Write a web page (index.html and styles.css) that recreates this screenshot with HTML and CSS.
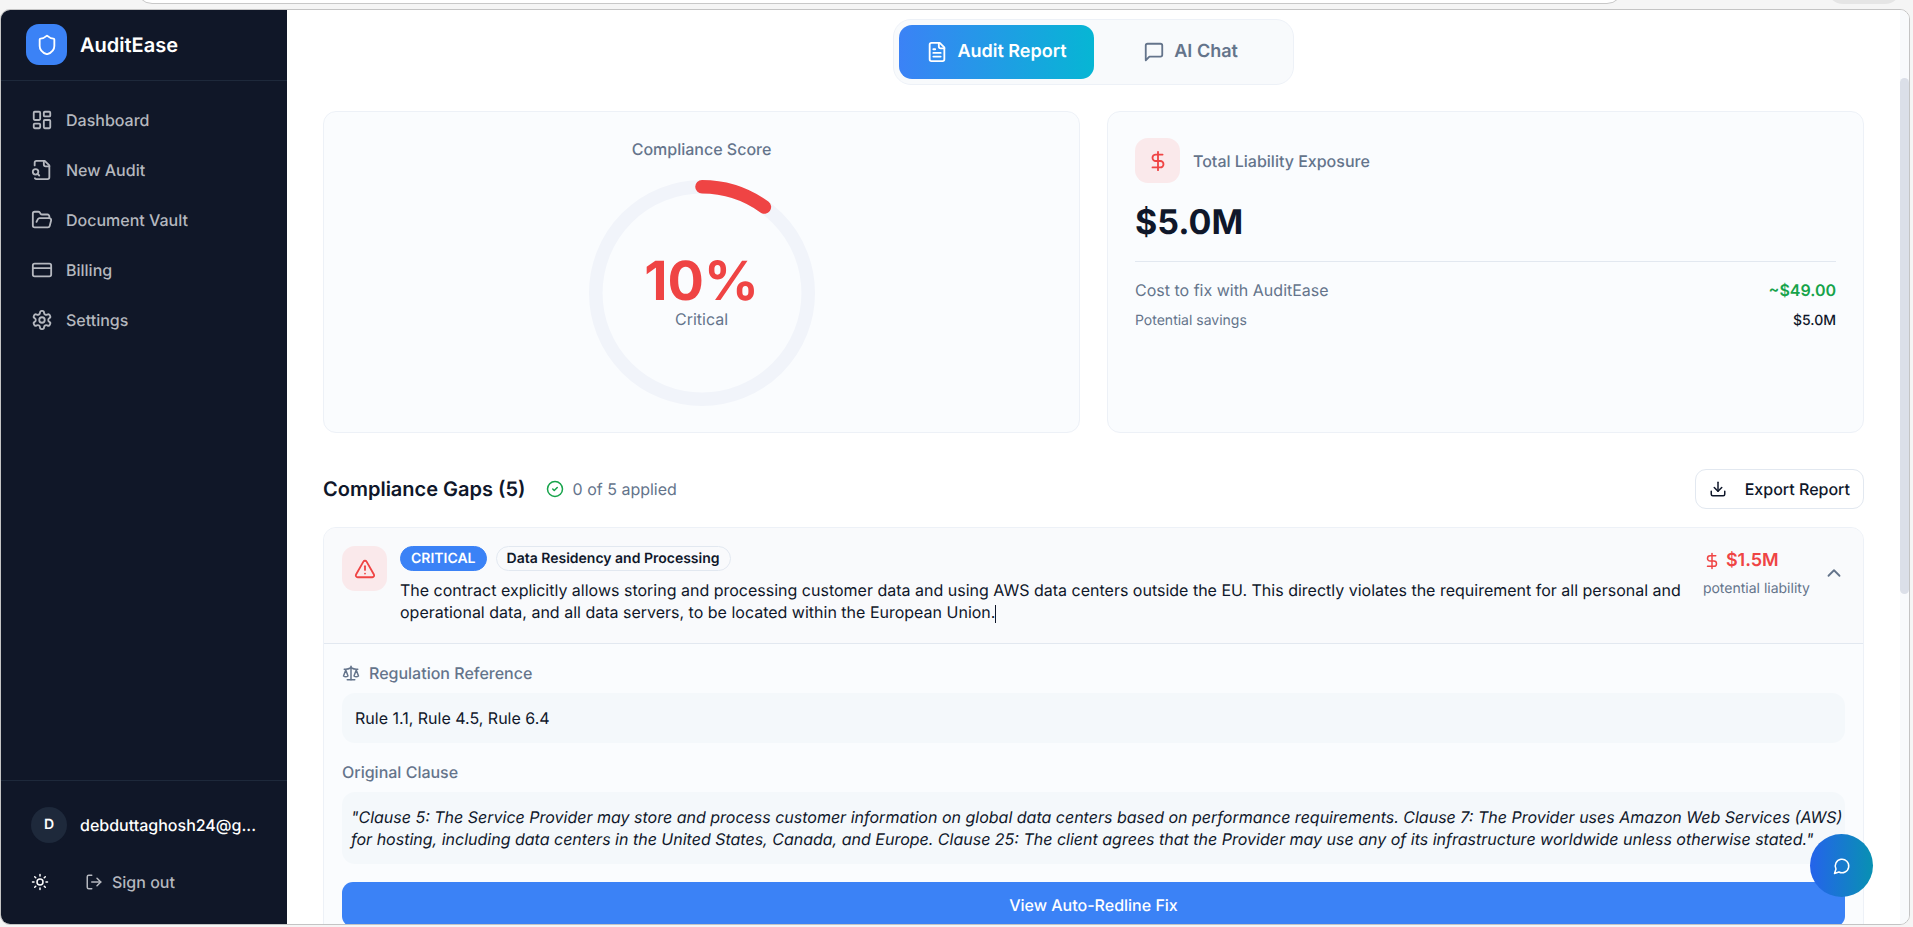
FILE: index.html
```html
<!DOCTYPE html>
<html lang="en">
<head>
    <meta charset="UTF-8">
    <meta name="viewport" content="width=device-width, initial-scale=1.0">
    <title>AuditEase - Audit Report</title>
    <link rel="stylesheet" href="styles.css">
</head>
<body>
    <div class="browser-bar">
        <div class="address-bar"></div>
        <div class="browser-button"></div>
    </div>

    <div class="app">
        <aside class="sidebar">
            <div class="brand">
                <div class="brand-logo">
                    <svg class="icon icon-md" viewBox="0 0 24 24"><path d="M20 13c0 5-3.500 7.500-7.660 8.950a1 1 0 0 1-.670-.010C7.500 20.500 4 18 4 13V6a1 1 0 0 1 1-1c2 0 4.500-1.200 6.240-2.720a1.170 1.170 0 0 1 1.520 0C14.510 3.810 17 5 19 5a1 1 0 0 1 1 1z"/></svg>
                </div>
                <span class="brand-name">AuditEase</span>
            </div>

            <nav class="nav">
                <a href="#" class="nav-item">
                    <svg class="icon icon-md" viewBox="0 0 24 24"><rect width="7" height="9" x="3" y="3" rx="1"/><rect width="7" height="5" x="14" y="3" rx="1"/><rect width="7" height="9" x="14" y="12" rx="1"/><rect width="7" height="5" x="3" y="16" rx="1"/></svg>
                    Dashboard
                </a>
                <a href="#" class="nav-item">
                    <svg class="icon icon-md" viewBox="0 0 24 24"><path d="M14 2v4a2 2 0 0 0 2 2h4"/><path d="M4.268 21a2 2 0 0 0 1.727 1H18a2 2 0 0 0 2-2V7l-5-5H6a2 2 0 0 0-2 2v3"/><path d="m9 18-1.500-1.500"/><circle cx="5" cy="14" r="3"/></svg>
                    New Audit
                </a>
                <a href="#" class="nav-item">
                    <svg class="icon icon-md" viewBox="0 0 24 24"><path d="m6 14 1.500-2.900A2 2 0 0 1 9.240 10H20a2 2 0 0 1 1.940 2.500l-1.540 6a2 2 0 0 1-1.950 1.500H4a2 2 0 0 1-2-2V5a2 2 0 0 1 2-2h3.900a2 2 0 0 1 1.690.900l.810 1.200a2 2 0 0 0 1.670.900H18a2 2 0 0 1 2 2v2"/></svg>
                    Document Vault
                </a>
                <a href="#" class="nav-item">
                    <svg class="icon icon-md" viewBox="0 0 24 24"><rect width="20" height="14" x="2" y="5" rx="2"/><path d="M2 10h20"/></svg>
                    Billing
                </a>
                <a href="#" class="nav-item">
                    <svg class="icon icon-md" viewBox="0 0 24 24"><path d="M12.220 2h-.440a2 2 0 0 0-2 2v.180a2 2 0 0 1-1 1.730l-.430.250a2 2 0 0 1-2 0l-.150-.080a2 2 0 0 0-2.730.730l-.220.380a2 2 0 0 0 .730 2.730l.150.100a2 2 0 0 1 1 1.720v.510a2 2 0 0 1-1 1.740l-.150.090a2 2 0 0 0-.730 2.730l.220.380a2 2 0 0 0 2.730.730l.150-.080a2 2 0 0 1 2 0l.430.250a2 2 0 0 1 1 1.730V20a2 2 0 0 0 2 2h.440a2 2 0 0 0 2-2v-.180a2 2 0 0 1 1-1.730l.430-.250a2 2 0 0 1 2 0l.150.080a2 2 0 0 0 2.730-.730l.220-.390a2 2 0 0 0-.730-2.730l-.150-.080a2 2 0 0 1-1-1.740v-.500a2 2 0 0 1 1-1.740l.150-.090a2 2 0 0 0 .730-2.730l-.220-.380a2 2 0 0 0-2.730-.730l-.150.080a2 2 0 0 1-2 0l-.430-.250a2 2 0 0 1-1-1.730V4a2 2 0 0 0-2-2z"/><circle cx="12" cy="12" r="3"/></svg>
                    Settings
                </a>
            </nav>

            <div class="sidebar-footer">
                <div class="user">
                    <div class="avatar">D</div>
                    <span class="user-email">debduttaghosh24@g...</span>
                </div>
                <div class="footer-actions">
                    <button class="theme-button" aria-label="Toggle theme">
                        <svg class="icon icon-sm" viewBox="0 0 24 24"><circle cx="12" cy="12" r="4"/><path d="M12 2v2M12 20v2M4.930 4.930l1.410 1.410M17.660 17.660l1.410 1.410M2 12h2M20 12h2M6.340 17.660l-1.410 1.410M19.070 4.930l-1.410 1.410"/></svg>
                    </button>
                    <button class="signout-button">
                        <svg class="icon icon-sm" viewBox="0 0 24 24"><path d="M9 21H5a2 2 0 0 1-2-2V5a2 2 0 0 1 2-2h4"/><path d="m16 17 5-5-5-5"/><path d="M21 12H9"/></svg>
                        Sign out
                    </button>
                </div>
            </div>
        </aside>

        <main class="content">
            <div class="tabs">
                <button class="tab tab-active">
                    <svg class="icon icon-md" viewBox="0 0 24 24"><path d="M15 2H6a2 2 0 0 0-2 2v16a2 2 0 0 0 2 2h12a2 2 0 0 0 2-2V7Z"/><path d="M14 2v4a2 2 0 0 0 2 2h4"/><path d="M10 9H8M16 13H8M16 17H8"/></svg>
                    Audit Report
                </button>
                <button class="tab">
                    <svg class="icon icon-md" viewBox="0 0 24 24"><path d="M21 15a2 2 0 0 1-2 2H7l-4 4V5a2 2 0 0 1 2-2h14a2 2 0 0 1 2 2z"/></svg>
                    AI Chat
                </button>
            </div>

            <div class="summary">
                <section class="card score-card">
                    <h2 class="card-label">Compliance Score</h2>
                    <div class="score-ring">
                        <svg class="ring" viewBox="0 0 200 200">
                            <circle class="ring-track" cx="100" cy="100" r="94"/>
                            <circle class="ring-value" cx="100" cy="100" r="94" pathLength="100" stroke-dasharray="10 100" transform="rotate(-90 100 100)"/>
                        </svg>
                        <div class="score-text">
                            <span class="score-number">10%</span>
                            <span class="score-status">Critical</span>
                        </div>
                    </div>
                </section>

                <section class="card">
                    <div class="liability-header">
                        <div class="alert-icon">
                            <svg class="icon icon-md" viewBox="0 0 24 24"><path d="M12 2v20"/><path d="M17 5H9.500a3.500 3.500 0 0 0 0 7h5a3.500 3.500 0 0 1 0 7H6"/></svg>
                        </div>
                        <h2 class="card-label">Total Liability Exposure</h2>
                    </div>
                    <p class="liability-value">$5.0M</p>
                    <div class="cost-rows">
                        <div class="cost-row">
                            <span>Cost to fix with AuditEase</span>
                            <span class="cost-fix">~$49.00</span>
                        </div>
                        <div class="cost-row cost-row-small">
                            <span>Potential savings</span>
                            <span class="cost-savings">$5.0M</span>
                        </div>
                    </div>
                </section>
            </div>

            <div class="gaps-header">
                <h2 class="gaps-title">Compliance Gaps (5)</h2>
                <div class="applied">
                    <svg class="icon icon-sm" viewBox="0 0 24 24"><circle cx="12" cy="12" r="10"/><path d="m9 12 2 2 4-4"/></svg>
                    0 of 5 applied
                </div>
                <button class="export-button">
                    <svg class="icon icon-sm" viewBox="0 0 24 24"><path d="M21 15v4a2 2 0 0 1-2 2H5a2 2 0 0 1-2-2v-4"/><path d="m7 10 5 5 5-5"/><path d="M12 15V3"/></svg>
                    Export Report
                </button>
            </div>

            <article class="gap">
                <div class="gap-header">
                    <div class="alert-icon">
                        <svg class="icon icon-md" viewBox="0 0 24 24"><path d="m21.730 18-8-14a2 2 0 0 0-3.480 0l-8 14A2 2 0 0 0 4 21h16a2 2 0 0 0 1.730-3"/><path d="M12 9v4"/><path d="M12 17h.010"/></svg>
                    </div>
                    <div class="gap-info">
                        <div class="badges">
                            <span class="badge badge-critical">CRITICAL</span>
                            <span class="badge">Data Residency and Processing</span>
                        </div>
                        <p class="gap-text">The contract explicitly allows storing and processing customer data and using AWS data centers outside the EU. This directly violates the requirement for all personal and operational data, and all data servers, to be located within the European Union.<span class="caret"></span></p>
                    </div>
                    <div class="gap-liability">
                        <div class="gap-amount">
                            <svg class="icon icon-sm" viewBox="0 0 24 24"><path d="M12 2v20"/><path d="M17 5H9.500a3.500 3.500 0 0 0 0 7h5a3.500 3.500 0 0 1 0 7H6"/></svg>
                            $1.5M
                        </div>
                        <span class="gap-note">potential liability</span>
                    </div>
                    <button class="collapse-button" aria-label="Collapse">
                        <svg class="icon icon-md" viewBox="0 0 24 24"><path d="m18 15-6-6-6 6"/></svg>
                    </button>
                </div>

                <div class="gap-body">
                    <h3 class="section-label">
                        <svg class="icon icon-sm" viewBox="0 0 24 24"><path d="m16 16 3-8 3 8c-.870.650-1.920 1-3 1s-2.130-.350-3-1Z"/><path d="m2 16 3-8 3 8c-.870.650-1.920 1-3 1s-2.130-.350-3-1Z"/><path d="M7 21h10"/><path d="M12 3v18"/><path d="M3 7h2c2 0 5-1 7-2 2 1 5 2 7 2h2"/></svg>
                        Regulation Reference
                    </h3>
                    <p class="quote">Rule 1.1, Rule 4.5, Rule 6.4</p>
                    <h3 class="section-label">Original Clause</h3>
                    <p class="quote quote-clause">"Clause 5: The Service Provider may store and process customer information on global data centers based on performance requirements. Clause 7: The Provider uses Amazon Web Services (AWS) for hosting, including data centers in the United States, Canada, and Europe. Clause 25: The client agrees that the Provider may use any of its infrastructure worldwide unless otherwise stated."</p>
                    <button class="fix-button">View Auto-Redline Fix</button>
                </div>
            </article>
        </main>

        <div class="scrollbar">
            <div class="scrollbar-thumb"></div>
        </div>

        <button class="chat-button" aria-label="Open chat">
            <svg class="icon icon-sm" viewBox="0 0 24 24"><path d="M7.900 20A9 9 0 1 0 4 16.100L2 22Z"/></svg>
        </button>
    </div>
</body>
</html>
```
FILE: styles.css
```css
* {
    margin: 0;
    padding: 0;
    box-sizing: border-box;
}
body {
    font-family: Inter, 'Segoe UI', Roboto, sans-serif;
    font-size: 16px;
    line-height: 22px;
    text-rendering: geometricPrecision;
    color: #0f172a;
    background: #f5f5f5;
    height: 100vh;
    display: flex;
    flex-direction: column;
    overflow: hidden;
}
button {
    font: inherit;
    color: inherit;
    text-rendering: inherit;
    background: none;
    border: none;
    cursor: pointer;
    display: flex;
    align-items: center;
    justify-content: center;
}
a {
    color: inherit;
    text-decoration: none;
}
.icon {
    fill: none;
    stroke: currentColor;
    stroke-width: 2;
    stroke-linecap: round;
    stroke-linejoin: round;
    flex-shrink: 0;
}
.icon-sm {
    width: 18px;
    height: 18px;
}
.icon-md {
    width: 22px;
    height: 22px;
}

/* Browser strip */
.browser-bar {
    height: 9px;
    flex-shrink: 0;
    display: flex;
    align-items: flex-end;
    padding: 0 12px 5px 136px;
    overflow: hidden;
}
.address-bar {
    flex: 1;
    height: 36px;
    margin-right: 204px;
    background: white;
    border: 1px solid #c8c8c8;
    border-radius: 16px;
}
.browser-button {
    width: 74px;
    height: 36px;
    background: #e5e5e5;
    border-radius: 16px;
}

.app {
    flex: 1;
    min-height: 0;
    margin: 0 3px 2px 0;
    display: flex;
    position: relative;
    background: white;
    border: 1px solid #c4c4c4;
    border-radius: 10px;
    overflow: hidden;
}

/* Sidebar */
.sidebar {
    width: 286px;
    flex-shrink: 0;
    display: flex;
    flex-direction: column;
    background: #101728;
    color: white;
}
.brand {
    display: flex;
    align-items: center;
    gap: 13px;
    padding: 14px 25px 15px;
    border-bottom: 1px solid #1e293b;
}
.brand-logo {
    width: 41px;
    height: 41px;
    display: flex;
    align-items: center;
    justify-content: center;
    background: #3b82f6;
    border-radius: 13px;
}
.brand-name {
    font-size: 20px;
    font-weight: 600;
}
.nav {
    flex: 1;
    display: flex;
    flex-direction: column;
    gap: 5px;
    padding: 16px 17px;
}
.nav-item {
    height: 45px;
    display: flex;
    align-items: center;
    gap: 13px;
    padding: 0 13px;
    color: #b5b8bf;
    font-weight: 500;
}
.sidebar-footer {
    border-top: 1px solid #1e293b;
    padding: 17px 17px 22px;
}
.user {
    height: 54px;
    display: flex;
    align-items: center;
    gap: 13px;
    padding: 0 13px;
}
.avatar {
    width: 36px;
    height: 36px;
    display: flex;
    align-items: center;
    justify-content: center;
    background: #1e293b;
    border-radius: 50%;
    font-size: 14px;
    font-weight: 600;
}
.user-email {
    font-weight: 500;
}
.footer-actions {
    display: flex;
    align-items: center;
    gap: 14px;
    margin-top: 10px;
}
.theme-button {
    padding: 10px 13px;
}
.signout-button {
    gap: 9px;
    padding: 9px;
    color: #b5b8bf;
    font-weight: 500;
}

/* Main content */
.content {
    flex: 1;
    min-width: 0;
    padding: 9px 36px 36px;
    overflow: hidden;
}
.tabs {
    width: fit-content;
    margin: 0 auto 26px;
    display: grid;
    grid-template-columns: 1fr 1fr;
    padding: 5px;
    background: #f8fafc;
    border: 1px solid #edf1f7;
    border-radius: 18px;
}
.tab {
    gap: 9px;
    height: 54px;
    padding: 0 27px;
    border-radius: 13px;
    color: #64748b;
    font-size: 18px;
    font-weight: 600;
}
.tab-active {
    background: linear-gradient(90deg, #3b82f6, #06b6d4);
    color: white;
}
.summary {
    display: grid;
    grid-template-columns: 1fr 1fr;
    gap: 27px;
}
.card {
    padding: 26px 27px;
    background: #fafcfe;
    border: 1px solid #edf1f7;
    border-radius: 13px;
}
.card-label {
    color: #64748b;
    font-size: 16px;
    font-weight: 500;
}
.score-card {
    display: flex;
    flex-direction: column;
    align-items: center;
    gap: 20px;
}
.score-ring {
    display: grid;
    place-items: center;
}
.score-ring > * {
    grid-area: 1 / 1;
}
.ring {
    width: 226px;
    height: 226px;
}
.ring-track,
.ring-value {
    fill: none;
    stroke: #f1f4fa;
    stroke-width: 12;
}
.ring-value {
    stroke: #ef4444;
    stroke-linecap: round;
}
.score-text {
    display: flex;
    flex-direction: column;
    align-items: center;
}
.score-number {
    color: #ef4444;
    font-size: 54px;
    font-weight: 700;
    line-height: 52px;
}
.score-status {
    color: #64748b;
}
.liability-header {
    display: flex;
    align-items: center;
    gap: 13px;
    margin-bottom: 20px;
}
.alert-icon {
    width: 45px;
    height: 45px;
    flex-shrink: 0;
    display: flex;
    align-items: center;
    justify-content: center;
    background: #fae9eb;
    border-radius: 13px;
    color: #ef4444;
}
.liability-value {
    font-size: 34px;
    font-weight: 700;
    line-height: 40px;
    margin-bottom: 18px;
}
.cost-rows {
    display: flex;
    flex-direction: column;
    gap: 11px;
    padding-top: 17px;
    border-top: 1px solid #e2e8f0;
}
.cost-row {
    display: flex;
    justify-content: space-between;
    color: #64748b;
}
.cost-row-small {
    font-size: 14px;
    line-height: 18px;
}
.cost-fix {
    color: #16a34a;
    font-weight: 600;
}
.cost-savings {
    color: #0f172a;
    font-weight: 500;
}

/* Compliance gaps */
.gaps-header {
    display: flex;
    align-items: center;
    gap: 20px;
    margin: 36px 0 18px;
}
.gaps-title {
    font-size: 20px;
    font-weight: 600;
}
.applied {
    display: flex;
    align-items: center;
    gap: 9px;
    color: #64748b;
}
.applied .icon {
    color: #16a34a;
}
.export-button {
    gap: 18px;
    height: 40px;
    margin-left: auto;
    padding: 0 13px;
    background: white;
    border: 1px solid #e2e8f0;
    border-radius: 11px;
    font-weight: 500;
}
.gap {
    background: #fafcfe;
    border: 1px solid #edf1f7;
    border-radius: 13px;
    overflow: hidden;
}
.gap-header {
    display: flex;
    align-items: flex-start;
    gap: 13px;
    padding: 18px 18px 20px;
    background: #f9fafc;
}
.gap-info {
    flex: 1;
    min-width: 0;
}
.badges {
    display: flex;
    gap: 9px;
    margin-bottom: 8px;
}
.badge {
    height: 25px;
    display: flex;
    align-items: center;
    padding: 0 10px;
    border: 1px solid #e2e8f0;
    border-radius: 13px;
    font-size: 14px;
    font-weight: 600;
}
.badge-critical {
    background: #3b82f6;
    border-color: #3b82f6;
    color: white;
}
.caret {
    display: inline-block;
    height: 18px;
    border-left: 1px solid #0f172a;
    vertical-align: middle;
}
.gap-amount {
    display: flex;
    align-items: center;
    gap: 5px;
    height: 30px;
    color: #ef4444;
    font-size: 18px;
    font-weight: 600;
}
.gap-note {
    color: #64748b;
    font-size: 14px;
}
.collapse-button {
    padding: 16px 0;
    color: #64748b;
}
.gap-body {
    padding: 18px;
    border-top: 1px solid #e2e8f0;
}
.section-label {
    display: flex;
    align-items: center;
    gap: 9px;
    margin-bottom: 9px;
    color: #64748b;
    font-size: 16px;
    font-weight: 500;
}
.quote {
    margin-bottom: 18px;
    padding: 14px 13px;
    background: #f4f8fb;
    border-radius: 13px;
}
.quote-clause {
    padding: 14px 0 14px 9px;
    font-style: italic;
}
.fix-button {
    width: 100%;
    height: 45px;
    background: #3b82f6;
    border-radius: 11px;
    color: white;
    font-weight: 500;
}

.scrollbar {
    width: 9px;
    flex-shrink: 0;
    padding-top: 68px;
    background: #f8fafc;
}
.scrollbar-thumb {
    height: 61%;
    background: #dbdfe8;
    border-radius: 5px;
}
.chat-button {
    position: absolute;
    right: 36px;
    bottom: 27px;
    width: 63px;
    height: 63px;
    background: linear-gradient(90deg, #2563eb, #0891b2);
    border-radius: 50%;
    color: white;
}
```
